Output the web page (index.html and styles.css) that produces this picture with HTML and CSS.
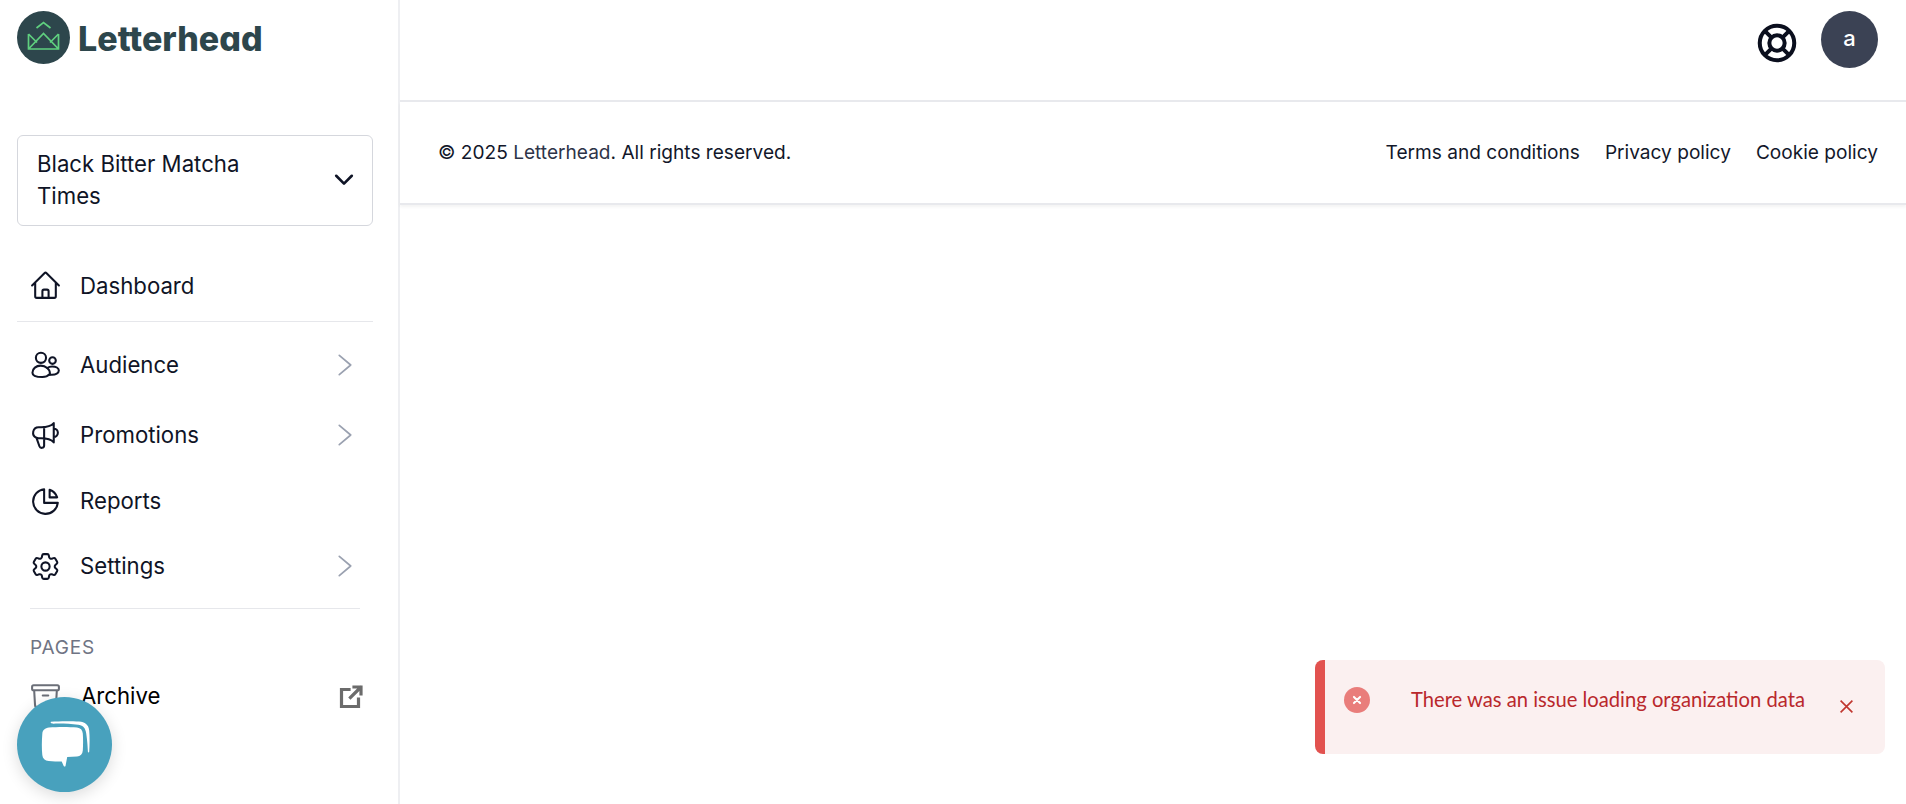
FILE: index.html
```html
<!DOCTYPE html>
<html lang="en">
<head>
<meta charset="utf-8">
<title>Letterhead</title>
<link rel="stylesheet" href="styles.css">
</head>
<body>
<div class="app">
  <aside class="sidebar">
    <a class="brand" href="#">
      <svg class="brand-mark" viewBox="0 0 53 53" fill="none">
        <circle cx="26.5" cy="26.5" r="26.5" fill="#2d464c"/>
        <path d="M19.500 17l7-5.500 7 5.500" stroke="#5fd07f" stroke-width="1.700"/>
        <path d="M11.500 23v15h30V23M11.500 38l15-15.500 15 15.500M11.500 23l8.500 8.500M41.500 23L33 31.500" stroke="#5fd07f" stroke-width="1.700"/>
      </svg>
      <span class="brand-name">Letterhead</span>
    </a>

    <button class="org-select" type="button">
      <span class="org-name">Black Bitter Matcha Times</span>
      <svg class="org-caret" viewBox="0 0 20 20" fill="none" stroke="#0f1426" stroke-width="2.200" stroke-linecap="round" stroke-linejoin="round"><path d="M3.500 6.500L10 13l6.500-6.500"/></svg>
    </button>

    <nav class="nav">
      <a class="nav-item nav-dash" href="#">
        <svg class="nav-icon" viewBox="0 0 24 24" fill="none" stroke="currentColor" stroke-width="1.500" stroke-linecap="round" stroke-linejoin="round"><path d="M2.250 12l8.954-8.955c.44-.439 1.152-.439 1.591 0L21.750 12M4.500 9.750v10.125c0 .621.504 1.125 1.125 1.125H9.750v-4.875c0-.621.504-1.125 1.125-1.125h2.250c.621 0 1.125.504 1.125 1.125V21h4.125c.621 0 1.125-.504 1.125-1.125V9.750M8.250 21h8.250"/></svg>
        <span>Dashboard</span>
      </a>
      <a class="nav-item nav-audience" href="#">
        <svg class="nav-icon" viewBox="0 0 24 24" fill="none" stroke="currentColor" stroke-width="1.500" stroke-linecap="round" stroke-linejoin="round"><circle cx="8.700" cy="6.400" r="3.700"/><circle cx="17.100" cy="8.400" r="2.400"/><path d="M2.500 17.200c0-3 2.700-5.100 6-5.100 1.900 0 3.500.6 4.700 1.700 1-.7 2.300-1.100 3.600-1.100 2.800 0 4.900 1.200 4.900 3 0 1.900-2.300 3-5 3-.7 0-1.400-.1-2-.2-1 1.300-2.800 1.900-5 1.900-3.800 0-7.200-.9-7.200-3.200z"/><path d="M13.200 13.800c1.300 1 2 2.400 2 3.900 0 .300 0 .6-.1 1"/></svg>
        <span>Audience</span>
        <svg class="nav-chevron" viewBox="0 0 14 20" fill="none" stroke="#9aa1b0" stroke-width="1.500" stroke-linecap="round" stroke-linejoin="round"><path d="M2 1.500l10 8.500-10 8.500"/></svg>
      </a>
      <a class="nav-item nav-promo" href="#">
        <svg class="nav-icon" viewBox="0 0 24 24" fill="none" stroke="currentColor" stroke-width="1.500" stroke-linecap="round" stroke-linejoin="round"><path d="M11 5.882V19.240a1.760 1.760 0 01-3.417.592l-2.147-6.150M18 13a3 3 0 100-6M5.436 13.683A4.001 4.001 0 017 6h1.832c4.100 0 7.625-1.234 9.168-3v14c-1.543-1.766-5.067-3-9.168-3H7a3.988 3.988 0 01-1.564-.317z"/></svg>
        <span>Promotions</span>
        <svg class="nav-chevron" viewBox="0 0 14 20" fill="none" stroke="#9aa1b0" stroke-width="1.500" stroke-linecap="round" stroke-linejoin="round"><path d="M2 1.500l10 8.500-10 8.500"/></svg>
      </a>
      <a class="nav-item nav-reports" href="#">
        <svg class="nav-icon" viewBox="0 0 24 24" fill="none" stroke="currentColor" stroke-width="1.500" stroke-linecap="round" stroke-linejoin="round"><path d="M11 3.055A9.001 9.001 0 1020.945 13H11V3.055z"/><path d="M20.488 9H15V3.512A9.025 9.025 0 0120.488 9z"/></svg>
        <span>Reports</span>
      </a>
      <a class="nav-item nav-settings" href="#">
        <svg class="nav-icon" viewBox="0 0 24 24" fill="none" stroke="currentColor" stroke-width="1.500" stroke-linecap="round" stroke-linejoin="round"><path d="M9.594 3.940c.09-.542.56-.94 1.110-.94h2.593c.55 0 1.020.398 1.110.94l.213 1.281c.063.374.313.686.645.870.074.04.147.083.22.127.324.196.72.257 1.075.124l1.217-.456a1.125 1.125 0 011.370.49l1.296 2.247a1.125 1.125 0 01-.26 1.431l-1.003.827c-.293.24-.438.613-.431.992a6.759 6.759 0 010 .255c-.007.378.138.75.43.99l1.005.828c.424.35.534.954.26 1.430l-1.298 2.247a1.125 1.125 0 01-1.369.491l-1.217-.456c-.355-.133-.75-.072-1.076.124a6.570 6.570 0 01-.22.128c-.331.183-.581.495-.644.869l-.213 1.280c-.09.543-.56.941-1.110.941h-2.594c-.55 0-1.020-.398-1.110-.94l-.213-1.281c-.062-.374-.312-.686-.644-.870a6.520 6.520 0 01-.22-.127c-.325-.196-.72-.257-1.076-.124l-1.217.456a1.125 1.125 0 01-1.369-.49l-1.297-2.247a1.125 1.125 0 01.26-1.431l1.004-.827c.292-.24.437-.613.43-.992a6.932 6.932 0 010-.255c.007-.378-.138-.75-.43-.99l-1.004-.828a1.125 1.125 0 01-.26-1.430l1.297-2.247a1.125 1.125 0 011.370-.491l1.216.456c.356.133.751.072 1.076-.124.072-.044.146-.087.22-.128.332-.183.582-.495.644-.869l.214-1.281z"/><path d="M15 12a3 3 0 11-6 0 3 3 0 016 0z"/></svg>
        <span>Settings</span>
        <svg class="nav-chevron" viewBox="0 0 14 20" fill="none" stroke="#9aa1b0" stroke-width="1.500" stroke-linecap="round" stroke-linejoin="round"><path d="M2 1.500l10 8.500-10 8.500"/></svg>
      </a>
    </nav>

    <div class="pages">
      <h2 class="pages-title">PAGES</h2>
      <a class="nav-item page-item" href="#">
        <svg class="nav-icon page-icon" viewBox="0 0 24 24" fill="none" stroke="#6b6f78" stroke-width="1.500" stroke-linecap="round" stroke-linejoin="round"><path d="M20.250 7.500l-.625 10.632a2.250 2.250 0 01-2.247 2.118H6.622a2.250 2.250 0 01-2.247-2.118L3.750 7.500M10 11.250h4M3.375 7.500h17.250c.621 0 1.125-.504 1.125-1.125v-1.500c0-.621-.504-1.125-1.125-1.125H3.375c-.621 0-1.125.504-1.125 1.125v1.500c0 .621.504 1.125 1.125 1.125z"/></svg>
        <span class="page-label">Archive</span>
        <svg class="page-external" viewBox="0 0 24 24" fill="none" stroke="#6b6b6b" stroke-width="3.200" stroke-linecap="square"><path d="M10 4.500H2.500v17h17V14"/><path d="M11.500 12.500l10-10M15 2h7v7"/></svg>
      </a>
    </div>
  </aside>

  <main class="main">
    <header class="topbar">
      <svg class="help" viewBox="0 0 24 24" fill="none" stroke="#0b0f1e" stroke-width="2.100"><path d="M18.364 5.636l-3.536 3.536m0 5.656l3.536 3.536M9.172 9.172L5.636 5.636m3.536 9.192l-3.536 3.536M21 12a9 9 0 11-18 0 9 9 0 0118 0zm-5 0a4 4 0 11-8 0 4 4 0 018 0z"/></svg>
      <div class="avatar">a</div>
    </header>
    <footer class="footer">
      <p class="copy">© 2025 <span class="copy-name">Letterhead</span>. All rights reserved.</p>
      <div class="links">
        <a href="#">Terms and conditions</a>
        <a href="#">Privacy policy</a>
        <a href="#">Cookie policy</a>
      </div>
    </footer>
  </main>
</div>

<button class="chat" type="button" aria-label="Chat">
  <svg class="chat-icon" viewBox="0 0 50 46" fill="#fff">
    <path d="M11 .8c8-.8 21-.8 28-.2 6 .6 9.600 3 10.200 8.800.6 6 .5 14.600 0 21.300-.1 1-1.300 1-1.300 0-.2-6-1-15-2-20-.9-4.500-3.500-6.500-7.700-7-8-.9-17-1.300-25-1-1.600 0-3.500-1.500-2.200-1.900z"/>
    <path d="M9 6.500c8.500-.8 20-.8 28 0 3.600.4 5.500 2.600 5.800 6 .4 5.300.4 12 0 17-.3 3.600-2.300 5.700-5.800 6-3.300.3-6.500.3-9.800.5L25.500 45c-.4.7-1.400.7-1.800 0l-2-4.500c-4.500-.1-8.500-.2-13-.6-3.800-.4-6-2.300-6.400-6C1.700 28 1.700 20 2.300 13c.3-4 2.700-6 6.700-6.500z"/>
  </svg>
</button>

<div class="toast" role="alert">
  <svg class="toast-icon" viewBox="0 0 23 23"><circle cx="11.500" cy="11.500" r="11.500" fill="#e97d7b"/><path d="M8.800 8.800l5.400 5.400M14.200 8.800l-5.400 5.400" stroke="#fff" stroke-width="1.800" stroke-linecap="round"/></svg>
  <span class="toast-text">There was an issue loading organization data</span>
  <svg class="toast-close" viewBox="0 0 14 14" fill="none" stroke="#c0362f" stroke-width="1.500"><path d="M1.500 1.500l11 11M12.500 1.500l-11 11"/></svg>
</div>
</body>
</html>
```

FILE: styles.css
```css
* { box-sizing: border-box; }
html, body { margin: 0; height: 100%; overflow: hidden; background: #fff; }
body { font-family: Inter, "Liberation Sans", sans-serif; color: #0f1426; }
a { color: inherit; text-decoration: none; }

.app { display: flex; height: 804px; }

.sidebar {
  width: 400px;
  flex: none;
  border-right: 2px solid #eeeff2;
  padding: 11px 25px 0 17px;
}

.brand { display: flex; align-items: center; gap: 8px; height: 53px; }
.brand-mark { width: 53px; height: 53px; flex: none; }
.brand-name {
  font-family: Inter, sans-serif;
  font-weight: 800;
  font-size: 34px;
  font-feature-settings: "cv11";
  letter-spacing: 0;
  padding-top: 2px;
  color: #2d464c;
}

.org-select {
  display: flex;
  align-items: center;
  justify-content: space-between;
  width: 100%;
  height: 91px;
  margin-top: 71px;
  padding: 0 16px 2px 19px;
  border: 1px solid #d5d7dd;
  border-radius: 6px;
  background: #fff;
  font: 400 22.2px/32px Inter, sans-serif;
  color: #0f1426;
  text-align: left;
}
.org-name { width: 260px; }
.org-caret { width: 24px; height: 24px; flex: none; }

.nav { display: flex; flex-direction: column; }
.nav-item {
  display: flex;
  align-items: center;
  padding-left: 12px;
  font-size: 22.2px;
  color: #0f1426;
}
.nav-item span { flex: 1; padding-bottom: 2px; }
.nav-icon { width: 33px; height: 33px; flex: none; margin-right: 18px; }
.nav-chevron { width: 16px; height: 24px; flex: none; margin-right: 20px; }

.nav-dash { height: 72px; margin-top: 24px; border-bottom: 1px solid #e6e7eb; }
.nav-item.nav-dash span { padding-bottom: 0; }
.nav-audience { height: 86px; }
.nav-promo { height: 54px; }
.nav-reports { height: 78px; }
.nav-settings { height: 52px; }

.pages {
  margin: 16px 13px 0;
  padding-top: 28px;
  border-top: 1px solid #e6e7eb;
}
.pages-title {
  margin: 0;
  font-size: 19px;
  font-weight: 400;
  line-height: 22px;
  letter-spacing: .8px;
  color: #6f7484;
}
.page-item { margin: 21px 0 0 -1px; padding: 0; height: 33px; }
.page-item .page-label { flex: 1; color: #000; }
.page-icon { margin-right: 19px; }
.page-external { width: 24px; height: 24px; flex: none; margin-right: -3px; }

.main { flex: 1; min-width: 0; }
.topbar {
  display: flex;
  align-items: center;
  justify-content: flex-end;
  gap: 21px;
  height: 102px;
  padding: 0 28px 21px 0;
  border-bottom: 2px solid #e8e9ed;
}
.help { width: 46px; height: 46px; flex: none; margin-top: 7px; }
.avatar {
  width: 57px;
  height: 57px;
  border-radius: 50%;
  background: #3b4254;
  color: #fff;
  display: flex;
  align-items: center;
  justify-content: center;
  font-size: 22px;
  font-weight: 500;
  padding-bottom: 3px;
  flex: none;
}

.footer {
  display: flex;
  align-items: center;
  justify-content: space-between;
  height: 103px;
  padding: 0 28px 2px 38px;
  border-bottom: 2px solid #e8e9ed;
  box-shadow: 0 2px 3px rgba(0,0,0,.05);
  font-size: 19.1px;
  color: #12172a;
}
.copy { margin: 0; }
.copy-name { color: #2e3448; }
.links { display: flex; gap: 25px; }

.chat {
  position: fixed;
  left: 17px;
  top: 697px;
  width: 95px;
  height: 95px;
  padding: 0;
  border: 0;
  border-radius: 50%;
  background: #48a1bd;
  box-shadow: 0 4px 16px rgba(0,0,0,.14);
  display: flex;
  align-items: center;
  justify-content: center;
}
.chat-icon { width: 50px; height: 46px; margin: -1px 0 0 1px; }

.toast {
  position: fixed;
  left: 1315px;
  top: 660px;
  width: 570px;
  height: 94px;
  display: flex;
  align-items: flex-start;
  padding-left: 19px;
  background: #fbf0f0;
  border-left: 10px solid #e2524f;
  border-radius: 8px;
  color: #b9282c;
  font-family: Lato, sans-serif;
  font-size: 20.2px;
}
.toast-icon { width: 26px; height: 26px; flex: none; margin-top: 27px; }
.toast-text { margin: 26px 0 0 41px; line-height: 26px; white-space: nowrap; }
.toast-close { width: 15px; height: 15px; flex: none; margin: 39px 0 0 34px; }
```
